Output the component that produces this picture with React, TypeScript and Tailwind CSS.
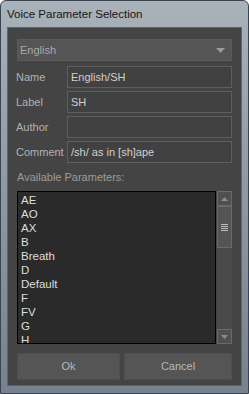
import React from 'react';

const items = ['AE', 'AO', 'AX', 'B', 'Breath', 'D', 'Default', 'F', 'FV', 'G', 'H'];

const fields = [
  { label: 'Name', value: 'English/SH' },
  { label: 'Label', value: 'SH' },
  { label: 'Author', value: '' },
  { label: 'Comment', value: '/sh/ as in [sh]ape' },
];

export default function App() {
  return (
    <div
      className="w-[249px] h-[394px] flex flex-col rounded-t-[6px] border border-[#3a4450] bg-gradient-to-b from-[#a9b1b9] via-[#8e98a2] to-[#76828f] text-[11px]"
      style={{ fontFamily: '"Liberation Sans", Arial, sans-serif' }}
    >
      {/* Title bar */}
      <div className="h-[26px] flex items-center pl-[6px] pt-[1px] text-[11.5px] text-[#161616]">
        Voice Parameter Selection
      </div>

      {/* Client area */}
      <div className="mx-[6px] h-[359px] border border-[#5f666d] bg-[#444444] px-[9px] pt-[11px] flex flex-col">
        {/* Language dropdown */}
        <div className="h-[22px] bg-[#555555] border border-[#5a5a5a] flex items-center justify-between pl-[2px] pr-[6px] text-[#a9a9a9]">
          <span>English</span>
          <svg width="9" height="5" viewBox="0 0 9 5">
            <path d="M0 0 L9 0 L4.5 5 Z" fill="#9a9a9a" />
          </svg>
        </div>

        {/* Fields */}
        <div className="mt-[5px] flex flex-col gap-[3px]">
          {fields.map((f) => (
            <div key={f.label} className="flex items-center h-[22px]">
              <div className="w-[51px] -ml-[1px] text-[#b2b2b2]">{f.label}</div>
              <div className="flex-1 h-[22px] border border-[#5e5e5e] bg-[#414141] flex items-center pl-[3px] text-[#d0d0d0]">
                {f.value}
              </div>
            </div>
          ))}
        </div>

        {/* Available parameters */}
        <div className="mt-[7px] h-[14px] leading-[14px] text-[#9c9c9c]">Available Parameters:</div>
        <div className="mt-[7px] flex h-[153px]">
          <div className="flex-1 border border-black bg-[#2a2a2a] pl-[3px] pt-[1px] overflow-hidden text-[11.5px] text-[#dedede]">
            {items.map((it) => (
              <div key={it} className="h-[14px] leading-[14px]">{it}</div>
            ))}
          </div>
          <div className="w-[15px] ml-[1px] flex flex-col bg-[#4a4a4a]">
            <div className="h-[15px] border border-[#6a6a6a] bg-[#505050] flex items-center justify-center">
              <svg width="7" height="4" viewBox="0 0 7 4">
                <path d="M0 4 L7 4 L3.5 0 Z" fill="#8c8c8c" />
              </svg>
            </div>
            <div className="h-[42px] border border-[#6a6a6a] bg-[#545454] flex flex-col items-center justify-center gap-[1px]">
              <div className="w-[7px] h-[1px] bg-[#bdbdbd]" />
              <div className="w-[7px] h-[1px] bg-[#bdbdbd]" />
              <div className="w-[7px] h-[1px] bg-[#bdbdbd]" />
              <div className="w-[7px] h-[1px] bg-[#bdbdbd]" />
            </div>
            <div className="flex-1" />
            <div className="h-[15px] border border-[#6a6a6a] bg-[#505050] flex items-center justify-center">
              <svg width="7" height="4" viewBox="0 0 7 4">
                <path d="M0 0 L7 0 L3.5 4 Z" fill="#8c8c8c" />
              </svg>
            </div>
          </div>
        </div>

        {/* Buttons */}
        <div className="mt-[9px] flex gap-[4px] h-[27px]">
          <button className="w-[103px] bg-[#555555] border border-[#4e4e4e] text-[#b8b8b8]">Ok</button>
          <button className="flex-1 bg-[#555555] border border-[#4e4e4e] text-[#b8b8b8]">Cancel</button>
        </div>
      </div>
    </div>
  );
}
